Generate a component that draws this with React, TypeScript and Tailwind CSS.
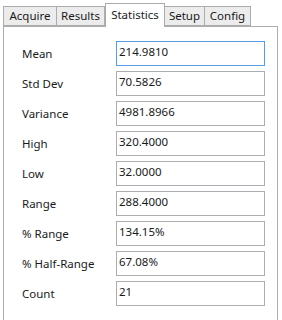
import React from 'react';

const tabs = ['Acquire', 'Results', 'Statistics', 'Setup', 'Config'];
const tabWidths: Record<string, string> = {
  Acquire: 'w-[54px]',
  Results: 'w-[49px]',
  Statistics: 'w-[60px]',
  Setup: 'w-[41px]',
  Config: 'w-[47px]',
};

const stats = [
  { label: 'Mean', value: '214.9810', focused: true },
  { label: 'Std Dev', value: '70.5826' },
  { label: 'Variance', value: '4981.8966' },
  { label: 'High', value: '320.4000' },
  { label: 'Low', value: '32.0000' },
  { label: 'Range', value: '288.4000' },
  { label: '% Range', value: '134.15%' },
  { label: '% Half-Range', value: '67.08%' },
  { label: 'Count', value: '21' },
];

export default function App() {
  const active = 'Statistics';
  return (
    <div className="w-[282px] h-[320px] overflow-hidden bg-white text-[11.5px] text-[#1a1a1a] font-['Noto_Sans',sans-serif]">
      {/* Tab strip */}
      <div className="flex items-end pl-[3px] pt-[3px] h-[26px]">
        {tabs.map((t) => {
          const sel = t === active;
          return (
            <div
              key={t}
              className={`${tabWidths[t]} flex items-center justify-center border border-[#acacac] leading-none ${
                sel
                  ? 'h-[24px] bg-white border-b-0 -mb-px relative z-10 pb-[2px]'
                  : 'h-[20px] bg-[#ececec] -ml-px first:ml-0'
              }`}
            >
              {t}
            </div>
          );
        })}
      </div>

      {/* Panel */}
      <div className="ml-[3px] w-[275px] h-[310px] border border-[#acacac] bg-white pt-[14px] pl-[18px]">
        <div className="flex flex-col gap-[5px]">
          {stats.map((s) => (
            <div key={s.label} className="flex items-center h-[25px]">
              <span className="w-[94px]">{s.label}</span>
              <div
                className={`w-[149px] h-[25px] border pl-[2px] pt-[1px] leading-[18px] ${
                  s.focused ? 'border-[#569de5]' : 'border-[#abadb3]'
                }`}
              >
                {s.value}
              </div>
            </div>
          ))}
        </div>
      </div>
    </div>
  );
}
